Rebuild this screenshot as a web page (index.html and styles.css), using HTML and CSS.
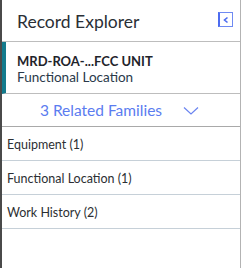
FILE: index.html
```html
<!DOCTYPE html>
<html>
<head>
<meta charset="utf-8">
<link rel="stylesheet" href="styles.css">
</head>
<body>
<div class="panel">
  <div class="header">
    <span class="title">Record Explorer</span>
    <button class="collapse"><svg width="8" height="8" viewBox="0 0 8 8"><path d="M5.5 1.5 L2.5 4 L5.5 6.5" fill="none" stroke="#4d6cf0" stroke-width="1.6"/></svg></button>
  </div>
  <div class="card">
    <div class="card-title">MRD-ROA-...FCC UNIT</div>
    <div class="card-sub">Functional Location</div>
  </div>
  <div class="related">
    <span class="related-text">3 Related Families</span>
    <svg class="chev" width="16" height="10" viewBox="0 0 16 10"><path d="M1 1.5 L8 8 L15 1.5" fill="none" stroke="#6a84f0" stroke-width="1.2"/></svg>
  </div>
  <div class="row">Equipment (1)</div>
  <div class="row">Functional Location (1)</div>
  <div class="row">Work History (2)</div>
</div>
</body>
</html>
```
FILE: styles.css
```css
html, body { margin: 0; padding: 0; background: #fff; }
body { font-family: Lato, "Noto Sans", sans-serif; }
.panel {
  width: 238px;
  height: 268px;
  border-left: 2px solid #4a4a4a;
  border-right: 1px solid #b3b3b3;
  box-sizing: content-box;
}
.header {
  height: 42px;
  border-bottom: 1px solid #bdbdbd;
  display: flex;
  align-items: center;
  justify-content: space-between;
  padding: 1px 7px 0 15px;
  box-sizing: border-box;
}
.title { font-size: 17.5px; color: #2a2f36; }
.collapse {
  width: 15px; height: 15px; padding: 0; margin: 0;
  border: 1px solid #6f8af2; border-left: 2px solid #4d6cf0;
  background: #fff; display: flex; align-items: center; justify-content: center;
  margin-top: -3px;
}
.card {
  height: 52px;
  border-left: 4px solid #137a8c;
  border-bottom: 1px solid #bdbdbd;
  padding: 11px 0 0 11px;
  box-sizing: border-box;
}
.card-title { font-size: 13px; font-weight: bold; color: #1f242b; line-height: 16px; }
.card-sub { font-size: 13.5px; color: #2a3a4a; line-height: 16px; }
.related {
  height: 33px;
  border-bottom: 1px solid #a9a9a9;
  display: flex; align-items: center; justify-content: center;
  box-sizing: border-box;
  position: relative;
  padding-right: 40px;
}
.related-text { font-size: 15.5px; color: #5b7cf0; }
.chev { position: absolute; left: 181px; top: 12px; }
.row {
  height: 34px;
  border-bottom: 1px solid #c6d0d8;
  padding: 2px 0 0 5px;
  display: flex; align-items: center;
  font-size: 12.5px; color: #2c2f33;
  box-sizing: border-box;
}
```
